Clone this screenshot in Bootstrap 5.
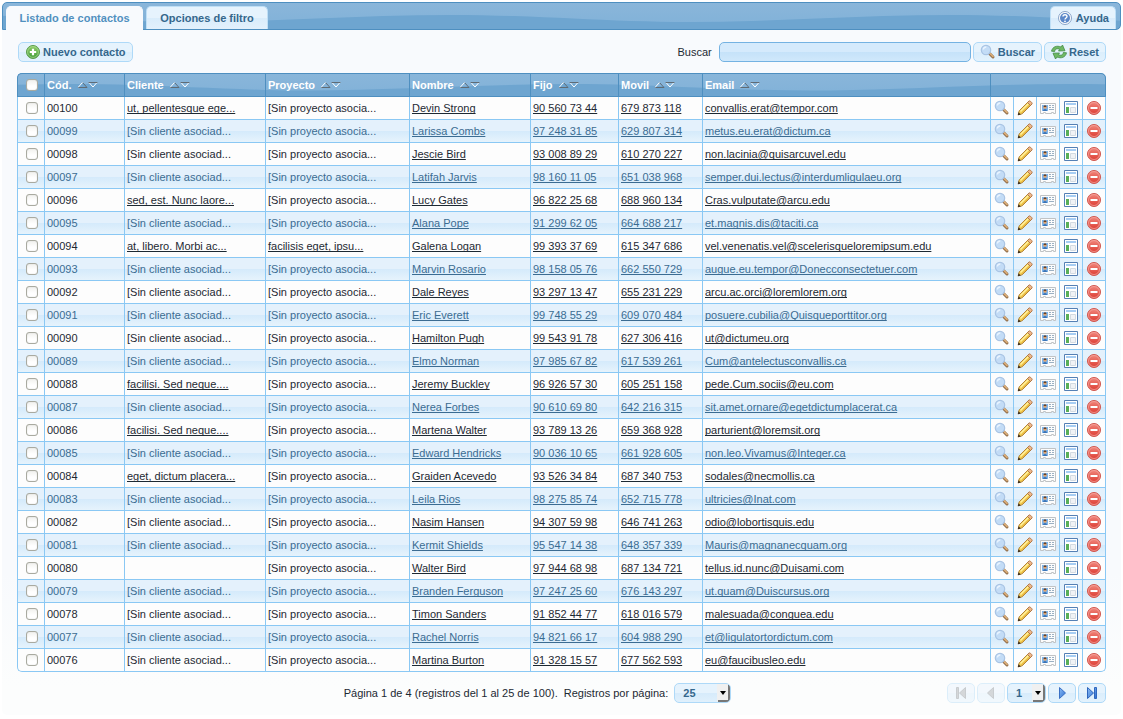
<!DOCTYPE html>
<html lang="es">
<head>
<meta charset="utf-8">
<meta name="viewport" content="width=device-width, initial-scale=1">
<title>Listado de contactos</title>
<link href="https://cdn.jsdelivr.net/npm/bootstrap@5.3.0/dist/css/bootstrap.min.css" rel="stylesheet">
<style>
:root{--edge:#8ac8f4;--soft:#aed9f8;--ink:#1d2933;--link:#3b6c92}
body{font:11px/16px "Liberation Sans",Arial,sans-serif;color:var(--ink);background:#fff;padding:2px}
.panel-box{background:linear-gradient(#f8fafd,#f8fafd 80%,#fcfdfd 96%);border-radius:5px;padding-bottom:12px}
.glossy{background:url("data:image/svg+xml,%3Csvg xmlns='http://www.w3.org/2000/svg' width='500' height='26' preserveAspectRatio='none' viewBox='0 0 500 26'%3E%3Cpath fill='%236ea5d0' d='M0 12C90 12 160 19 240 19S410 12 500 12V26H0Z'/%3E%3C/svg%3E") 447px 0/500px 100% repeat-x,linear-gradient(#8ab6da,#80b1d8)}
.topbar{height:28px;border:1px solid #4e8fc0;border-radius:5px 5px 5px 0;padding:3px 4px 0 3px;gap:3px}
.tab-item{font:bold 11px/16px "Liberation Sans",Arial,sans-serif;color:#35678c;background:linear-gradient(#e6f3fd 50%,#d9ecfb 50%,#e3f1fc);border:1px solid #bfdff6;border-bottom:0;border-radius:5px 5px 0 0;height:23px;padding:3px 0;text-align:center;text-decoration:none}
.tab-main{width:137px}
.tab-filter{width:122px}
.tab-help{padding:3px 6px;gap:3px}
.tab-item.active{color:#5190bf;background:#f8fafd;border-color:#f8fafd;height:25px}
.content{padding:12px 15px 0}
.toolbar{margin-bottom:11px;gap:2px}
.toolbar label{margin-right:5px}
.pill{font:bold 11px/16px "Liberation Sans",Arial,sans-serif;color:#35678c;background:linear-gradient(#e6f3fd 50%,#dbeefc 50%,#e3f2fd);border:1px solid var(--soft);border-radius:5px;height:20px;padding:0 6px;gap:2px}
.pill.first-pill{margin-left:1px}
.pill:disabled{opacity:.4}
.pill:hover{background:#d0e5f5}
.page-btn{width:28px;padding:0}
.pic{width:16px;height:16px;display:block;flex:none}
.query{width:252px;height:20px;border:1px solid #74b2e2;border-radius:5px;background:linear-gradient(#d5eafc 50%,#c5e2f9 50%,#d0e8fb);padding:0 5px}
.contacts{width:100%;table-layout:fixed;border-collapse:separate;border-spacing:0}
.contacts th{height:24px;padding:0 2px;color:#fff;border:solid #4e8fc0;border-width:1px 0 1px 1px;white-space:nowrap;line-height:16px}
.contacts thead tr{background-position:53px 0,0 0}
.contacts td{height:23px;padding:0 2px;border:solid var(--edge);border-width:0 0 1px 1px;background:#fdfdfd;white-space:nowrap;overflow:hidden}
.contacts tr>:last-child{border-right-width:1px}
.contacts tbody tr:nth-child(even) td{background:linear-gradient(#e4f1fc 50%,#d4eafb 50%,#e6f3fc);color:var(--link)}
.contacts th:first-child{border-top-left-radius:5px}
.contacts th:last-child{border-top-right-radius:5px}
.contacts tr:last-child td:first-child{border-bottom-left-radius:5px}
.contacts tr:last-child td:last-child{border-bottom-right-radius:5px}
.contacts thead,.contacts thead tr{border-radius:5px 5px 0 0}
.contacts .tick-cell{padding:0 0 0 8px}
.contacts .tool-cell{padding:0 3px}
.contacts td a{color:inherit;text-decoration-skip-ink:none;text-underline-offset:1px;text-decoration-thickness:1px}
.tick{appearance:none;display:block;width:12px;height:12px;margin:0;border:1px solid #a9aaa0;border-radius:3px;background:linear-gradient(#f1f1ee,#fff 60%);box-shadow:inset 0 0 1px #bbb}
.tick:checked{background:#5c9ccc}
.sorter{width:20px;height:6px;margin-left:3px;vertical-align:1px}
.drop{appearance:none;font:bold 11px/16px "Liberation Sans",Arial,sans-serif;color:#35678c;height:20px;border:1px solid var(--soft);border-radius:5px;padding:0 8px;background:url("data:image/svg+xml,%3Csvg xmlns='http://www.w3.org/2000/svg' width='13' height='18'%3E%3Cpath fill='%23f0f0f0' d='M0 0h13v18H0z'/%3E%3Cpath fill='%23777' d='M11 1h2v17H1v-2h10z'/%3E%3Cpath fill='%23000' d='M3 7h6L6 11z'/%3E%3C/svg%3E") right 0 no-repeat,linear-gradient(#e6f3fd 50%,#d6ebfb 50%,#e0f0fc)}
.drop-size{width:57px}
.drop-page{width:39px}
.pager{padding-top:11px}
.pager-info{margin-left:30%;gap:6px}
.pager-nav{gap:2px}
</style>
</head>
<body>
<svg width="0" height="0" class="position-absolute" aria-hidden="true">
<defs>
<linearGradient id="gGreen" x2="0" y2="1"><stop stop-color="#93cf6b"/><stop offset="1" stop-color="#3d9a37"/></linearGradient>
<linearGradient id="gRed" x2="0" y2="1"><stop stop-color="#f18a80"/><stop offset="1" stop-color="#dc3a30"/></linearGradient>
<linearGradient id="gBlue" x2="1" y2="1"><stop stop-color="#8bbcf5"/><stop offset="1" stop-color="#2c6ed0"/></linearGradient>
</defs>
<symbol id="i-add" viewBox="0 0 16 16"><circle cx="8" cy="8" r="6.5" fill="url(#gGreen)" stroke="#5a9c4c"/><circle cx="8" cy="8" r="5.4" fill="none" stroke="#b2dc97" stroke-width=".7"/><path d="M8 4.8v6.4M4.800 8h6.4" stroke="#fff" stroke-width="2.2"/></symbol>
<symbol id="i-help" viewBox="0 0 16 16"><circle cx="8" cy="8" r="6.5" fill="#fff" stroke="#8aa4c8"/><circle cx="8" cy="8" r="5" fill="#5c88c8"/><path d="M6 6.5c0-2.400 4-2.300 4 0C10 8 8 7.900 8 9.4" fill="none" stroke="#fff" stroke-width="1.4"/><circle cx="8" cy="11.3" r=".9" fill="#fff"/></symbol>
<symbol id="i-find" viewBox="0 0 16 16"><path d="M9.5 9.5l3.500 3.500" stroke="#94704c" stroke-width="3" stroke-linecap="round"/><path d="M10.3 9.800l2.700 2.700" stroke="#dfb078" stroke-width="1.6" stroke-linecap="round"/><circle cx="6" cy="6" r="4.7" fill="#c3dcf6" stroke="#a9c4e4" stroke-width="1.2"/><path d="M3.300 5.500a3 3 0 0 1 3-2.500" fill="none" stroke="#e9f4ff" stroke-width="1.4"/></symbol>
<symbol id="i-reset" viewBox="0 0 16 16"><path d="M.5 7.200C1.500 2.500 6 1.200 10 3l1.500-2 2.500 5.800-6.500.2 1.300-1.600C6 4 4 5 3.700 7.500z" fill="#6fb863" stroke="#438c46" stroke-width=".8"/><path d="M15.500 8.800c-1 4.700-5.500 6-9.500 4.200l-1.500 2L2 9.200 8.500 9l-1.300 1.600c2.800 1.400 4.800.4 5.100-2.100z" fill="#6fb863" stroke="#438c46" stroke-width=".8"/></symbol>
<symbol id="i-edit" viewBox="0 0 16 16"><path d="M1.2 14.800l1-4L11.500 1.500l3 3L5.200 13.800z" fill="#f7d354" stroke="#b58436"/><path d="M3.500 11.500l8-8" stroke="#fff0a0" stroke-width="1.2"/><path d="M4.800 12.800l8-8" stroke="#dda73a"/><path d="M10.500 2.500l1.400-1.400q.8-.6 1.500.1l1.500 1.500q.6.7 0 1.400l-1.400 1.400z" fill="#efb78a" stroke="#a46b3c" stroke-width=".8"/><path d="M.8 15.200l.8-3 2.200 2.200z" fill="#382c20"/></symbol>
<symbol id="i-card" viewBox="0 0 16 16"><path d="M.5 3.500h15v10h-2v-1h-2v1h-6v-1h-2v1h-3z" fill="#fcfcfc" stroke="#c0c3c5"/><path d="M2 5h6v6H2z" fill="#7fb4e8"/><circle cx="5" cy="7.300" r="1.500" fill="#dfa06a"/><path d="M3.500 7q.2-1.700 1.500-1.700T6.500 7z" fill="#6b4020"/><path d="M3 11q0-2 2-2t2 2z" fill="#3a72b4"/><path d="M9 5.500h2M12 5.500h2M9 7.500h2M12 7.500h2M9 9.500h5" stroke="#9bb0c2"/></symbol>
<symbol id="i-page" viewBox="0 0 16 16"><path d="M1.500 1.500h13v13h-13z" fill="#fff" stroke="#5580b5"/><path d="M3 3h10v2H3z" fill="#a7cdf3"/><path d="M3 7h3v6H3z" fill="#5aaf58"/><path d="M7.500 7.500h5v5h-5z" fill="#f0f2f5" stroke="#d3dae1"/></symbol>
<symbol id="i-del" viewBox="0 0 16 16"><circle cx="8" cy="8" r="6.5" fill="url(#gRed)" stroke="#d0574f"/><circle cx="8" cy="8" r="5.5" fill="none" stroke="#f6aaa3" stroke-width=".7"/><path d="M4.500 7h7v2h-7z" fill="#fff"/></symbol>
<symbol id="i-next" viewBox="0 0 16 16"><path d="M5.500 2.500l6 5.500-6 5.500z" fill="url(#gBlue)" stroke="#3a70c4"/></symbol>
<symbol id="i-last" viewBox="0 0 16 16"><path d="M3.500 2.500l6 5.500-6 5.500zM10.500 2.500h2v11h-2z" fill="url(#gBlue)" stroke="#2f66bd"/></symbol>
<symbol id="i-prev" viewBox="0 0 16 16"><path d="M10.500 2.500L4.500 8l6 5.500z" fill="#999fa6" stroke="#7d848c"/></symbol>
<symbol id="i-first" viewBox="0 0 16 16"><path d="M12.500 2.500L6.500 8l6 5.500zM3.500 2.500h2v11h-2z" fill="#999fa6" stroke="#7d848c"/></symbol>
<symbol id="i-sort" viewBox="0 0 20 6"><path d="M4.500.5l4.500 5M0 5.500h9M11 .5h8" fill="none" stroke="#5f6b75"/><path d="M0 5.500L4.500.5" fill="none" stroke="#fff"/><path d="M11 .5l4 4.500 4-4.500" fill="none" stroke="#fff"/><path d="M10.500.5h9" stroke="#5f6b75"/></symbol>
</svg>
<main class="panel-box">
<nav class="topbar glossy d-flex">
<a class="tab-item tab-main active" href="#">Listado de contactos</a>
<a class="tab-item tab-filter" href="#">Opciones de filtro</a>
<a class="tab-item tab-help d-flex ms-auto" href="#"><svg class="pic"><use href="#i-help"/></svg>Ayuda</a>
</nav>
<div class="content">
<form class="toolbar d-flex align-items-center" onsubmit="return false">
<button type="button" class="pill first-pill d-flex align-items-center me-auto"><svg class="pic"><use href="#i-add"/></svg>Nuevo contacto</button>
<label for="q">Buscar</label>
<input id="q" type="text" class="query">
<button type="submit" class="pill d-flex align-items-center"><svg class="pic"><use href="#i-find"/></svg>Buscar</button>
<button type="reset" class="pill d-flex align-items-center"><svg class="pic"><use href="#i-reset"/></svg>Reset</button>
</form>
<table class="contacts">
<colgroup><col style="width:27px"><col style="width:80px"><col style="width:141px"><col style="width:144px"><col style="width:121px"><col style="width:88px"><col style="width:84px"><col><col style="width:23px"><col style="width:23px"><col style="width:23px"><col style="width:23px"><col style="width:24px"></colgroup>
<thead><tr class="glossy" id="heads"></tr></thead>
<tbody id="rows"></tbody>
</table>
<div class="pager d-flex align-items-center">
<div class="pager-info d-flex align-items-center">
<span>Página 1 de 4 (registros del 1 al 25 de 100).</span>
<label for="size">Registros por página:</label>
<select id="size" class="drop drop-size"><option>25</option><option>50</option><option>100</option></select>
</div>
<div class="pager-nav d-flex ms-auto">
<button class="pill page-btn d-flex align-items-center justify-content-center" disabled aria-label="Primera"><svg class="pic"><use href="#i-first"/></svg></button>
<button class="pill page-btn d-flex align-items-center justify-content-center" disabled aria-label="Anterior"><svg class="pic"><use href="#i-prev"/></svg></button>
<select class="drop drop-page" aria-label="Página"><option>1</option><option>2</option><option>3</option><option>4</option></select>
<button class="pill page-btn d-flex align-items-center justify-content-center" aria-label="Siguiente"><svg class="pic"><use href="#i-next"/></svg></button>
<button class="pill page-btn d-flex align-items-center justify-content-center" aria-label="Última"><svg class="pic"><use href="#i-last"/></svg></button>
</div>
</div>
</div>
</main>
<script src="https://cdn.jsdelivr.net/npm/bootstrap@5.3.0/dist/js/bootstrap.bundle.min.js"></script>
<script>
const contacts = `Devin Strong|90 560 73 44|679 873 118|convallis.erat@tempor.com|ut, pellentesque ege...
Larissa Combs|97 248 31 85|629 807 314|metus.eu.erat@dictum.ca
Jescie Bird|93 008 89 29|610 270 227|non.lacinia@quisarcuvel.edu
Latifah Jarvis|98 160 11 05|651 038 968|semper.dui.lectus@interdumligulaeu.org
Lucy Gates|96 822 25 68|688 960 134|Cras.vulputate@arcu.edu|sed, est. Nunc laore...
Alana Pope|91 299 62 05|664 688 217|et.magnis.dis@taciti.ca
Galena Logan|99 393 37 69|615 347 686|vel.venenatis.vel@scelerisqueloremipsum.edu|at, libero. Morbi ac...|facilisis eget, ipsu...
Marvin Rosario|98 158 05 76|662 550 729|augue.eu.tempor@Donecconsectetuer.com
Dale Reyes|93 297 13 47|655 231 229|arcu.ac.orci@loremlorem.org
Eric Everett|99 748 55 29|609 070 484|posuere.cubilia@Quisqueporttitor.org
Hamilton Pugh|99 543 91 78|627 306 416|ut@dictumeu.org
Elmo Norman|97 985 67 82|617 539 261|Cum@antelectusconvallis.ca
Jeremy Buckley|96 926 57 30|605 251 158|pede.Cum.sociis@eu.com|facilisi. Sed neque....
Nerea Forbes|90 610 69 80|642 216 315|sit.amet.ornare@egetdictumplacerat.ca
Martena Walter|93 789 13 26|659 368 928|parturient@loremsit.org|facilisi. Sed neque....
Edward Hendricks|90 036 10 65|661 928 605|non.leo.Vivamus@Integer.ca
Graiden Acevedo|93 526 34 84|687 340 753|sodales@necmollis.ca|eget, dictum placera...
Leila Rios|98 275 85 74|652 715 778|ultricies@Inat.com
Nasim Hansen|94 307 59 98|646 741 263|odio@lobortisquis.edu
Kermit Shields|95 547 14 38|648 357 339|Mauris@magnanecquam.org
Walter Bird|97 944 68 98|687 134 721|tellus.id.nunc@Duisami.com| 
Branden Ferguson|97 247 25 60|676 143 297|ut.quam@Duiscursus.org
Timon Sanders|91 852 44 77|618 016 579|malesuada@conguea.edu
Rachel Norris|94 821 66 17|604 988 290|et@ligulatortordictum.com
Martina Burton|91 328 15 57|677 562 593|eu@faucibusleo.edu`.split('\n').map(line => line.split('|'));
const icon = name => `<svg class="pic"><use href="#i-${name}"/></svg>`;
const link = text => text.trim() ? `<a href="#">${text}</a>` : '';
const tick = label => `<input type="checkbox" class="tick" aria-label="${label}">`;
document.getElementById('heads').innerHTML = `<th class="tick-cell">${tick('Seleccionar todos')}</th>` +
  ['Cód.', 'Cliente', 'Proyecto', 'Nombre', 'Fijo', 'Movil', 'Email'].map(h => `<th>${h} <svg class="sorter"><use href="#i-sort"/></svg></th>`).join('') +
  '<th colspan="5"></th>';
document.getElementById('rows').innerHTML = contacts.map(([name, phone, mobile, email, client, project], i) => {
  const code = String(100 - i).padStart(5, '0');
  return `<tr><td class="tick-cell">${tick(code)}</td><td>${code}</td>
    <td>${client === undefined ? '[Sin cliente asociad...' : link(client)}</td>
    <td>${project === undefined ? '[Sin proyecto asocia...' : link(project)}</td>
    ${[name, phone, mobile, email].map(v => `<td>${link(v)}</td>`).join('')}
    ${[['find', 'Ver'], ['edit', 'Editar'], ['card', 'Tarjeta'], ['page', 'Ficha'], ['del', 'Borrar']].map(([n, t]) => `<td class="tool-cell"><a href="#" aria-label="${t}">${icon(n)}</a></td>`).join('')}</tr>`;
}).join('');
</script>
</body>
</html>
